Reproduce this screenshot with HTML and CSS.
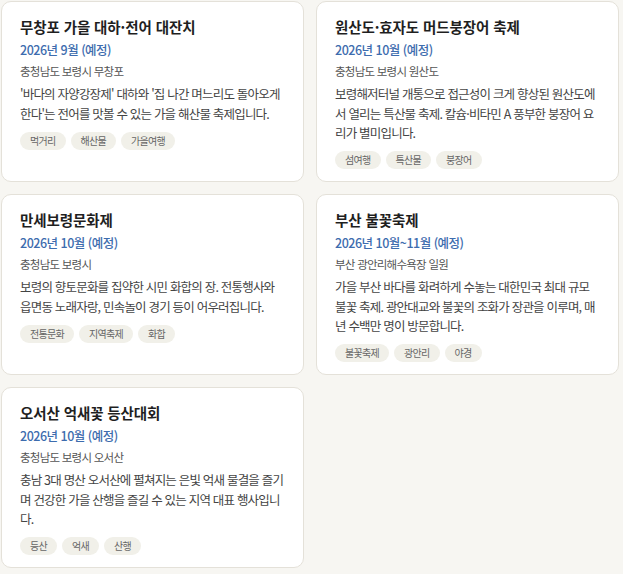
FILE: index.html
```html
<!DOCTYPE html>
<html lang="ko">
<head>
<meta charset="utf-8">
<title>축제 목록</title>
<link rel="stylesheet" href="styles.css">
</head>
<body>
<main class="grid">
  <article class="card">
    <h3 class="title">무창포 가을 대하·전어 대잔치</h3>
    <p class="date">2026년 9월 (예정)</p>
    <p class="loc">충청남도 보령시 무창포</p>
    <p class="desc">'바다의 자양강장제' 대하와 '집 나간 며느리도 돌아오게 한다'는 전어를 맛볼 수 있는 가을 해산물 축제입니다.</p>
    <ul class="tags"><li>먹거리</li><li>해산물</li><li>가을여행</li></ul>
  </article>
  <article class="card">
    <h3 class="title">원산도·효자도 머드붕장어 축제</h3>
    <p class="date">2026년 10월 (예정)</p>
    <p class="loc">충청남도 보령시 원산도</p>
    <p class="desc">보령해저터널 개통으로 접근성이 크게 향상된 원산도에서 열리는 특산물 축제. 칼슘·비타민 A 풍부한 붕장어 요리가 별미입니다.</p>
    <ul class="tags"><li>섬여행</li><li>특산물</li><li>붕장어</li></ul>
  </article>
  <article class="card">
    <h3 class="title">만세보령문화제</h3>
    <p class="date">2026년 10월 (예정)</p>
    <p class="loc">충청남도 보령시</p>
    <p class="desc">보령의 향토문화를 집약한 시민 화합의 장. 전통행사와 읍면동 노래자랑, 민속놀이 경기 등이 어우러집니다.</p>
    <ul class="tags"><li>전통문화</li><li>지역축제</li><li>화합</li></ul>
  </article>
  <article class="card">
    <h3 class="title">부산 불꽃축제</h3>
    <p class="date">2026년 10월~11월 (예정)</p>
    <p class="loc">부산 광안리해수욕장 일원</p>
    <p class="desc">가을 부산 바다를 화려하게 수놓는 대한민국 최대 규모 불꽃 축제. 광안대교와 불꽃의 조화가 장관을 이루며, 매년 수백만 명이 방문합니다.</p>
    <ul class="tags"><li>불꽃축제</li><li>광안리</li><li>야경</li></ul>
  </article>
  <article class="card">
    <h3 class="title">오서산 억새꽃 등산대회</h3>
    <p class="date">2026년 10월 (예정)</p>
    <p class="loc">충청남도 보령시 오서산</p>
    <p class="desc">충남 3대 명산 오서산에 펼쳐지는 은빛 억새 물결을 즐기며 건강한 가을 산행을 즐길 수 있는 지역 대표 행사입니다.</p>
    <ul class="tags"><li>등산</li><li>억새</li><li>산행</li></ul>
  </article>
</main>
</body>
</html>
```
FILE: styles.css
```css
* { box-sizing: border-box; }
html, body {
  margin: 0;
  padding: 0;
  background: #f7f6f2;
}
body {
  font-family: "Noto Sans CJK KR", "Noto Sans", sans-serif;
  color: #333;
}
.grid {
  display: grid;
  grid-template-columns: 303px 303px;
  column-gap: 12px;
  row-gap: 12px;
  padding: 1px;
  align-items: stretch;
}
.card {
  background: #ffffff;
  border: 1px solid #e4e1d9;
  border-radius: 10px;
  padding: 15px 19.4px 12px 18px;
  min-height: 181px;
}
.title {
  margin: 0;
  font-size: 14.5px;
  line-height: 20px;
  font-weight: 700;
  color: #1f1f1f;
  letter-spacing: -0.1px;
}
.date {
  margin: 4px 0 0;
  font-size: 12.5px;
  line-height: 18px;
  font-weight: 500;
  color: #3d6cae;
  letter-spacing: -0.5px;
}
.loc {
  margin: 3px 0 0;
  font-size: 11.5px;
  line-height: 18px;
  color: #555;
  letter-spacing: -0.75px;
}
.desc {
  margin: 4px 0 0;
  font-size: 12.5px;
  line-height: 19.5px;
  color: #444;
  letter-spacing: -0.8px;
}
.tags {
  list-style: none;
  margin: 8.5px 0 0;
  padding: 0;
  display: flex;
  gap: 5px;
}
.tags li {
  height: 18px;
  line-height: 18px;
  padding: 0 10px;
  border-radius: 9px;
  background: #f1f0e9;
  color: #666;
  font-size: 10px;
  letter-spacing: -0.7px;
}
```
